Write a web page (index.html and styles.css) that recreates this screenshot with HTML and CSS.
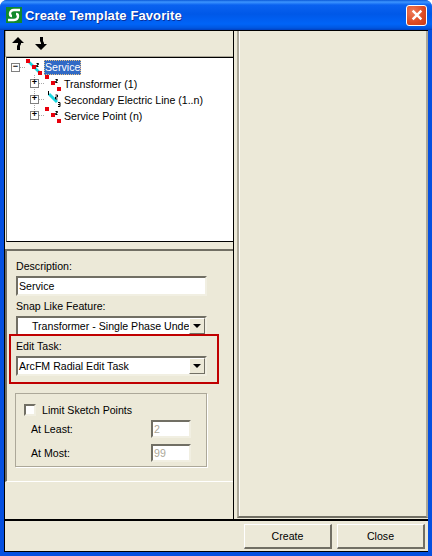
FILE: index.html
```html
<!DOCTYPE html>
<html>
<head>
    <meta charset="utf-8">
    <title>Create Template Favorite</title>
    <link rel="stylesheet" href="styles.css">
</head>
<body>
    <svg class="defs" width="0" height="0">
        <symbol id="feature" viewBox="0 0 16 16">
            <path d="M0 0h4v4h-4zM6 6h4v4h-4zM12 12h4v4h-4z" fill="#e8000c"/>
            <path d="M11 5h2v1h-1v1h-1v1h2" fill="none" stroke="#000" stroke-width="1" transform="translate(-.5 -.5)"/>
        </symbol>
        <symbol id="line-feature" viewBox="0 0 16 16">
            <path d="M4 3l8 8" fill="none" stroke="#19d5e0" stroke-width="3"/>
            <path d="M3.500 0v4M10.500 4h2v2h-2v2h2M13 11.500h2v4h-2M15 13.500h-2" fill="none" stroke="#000" stroke-width="1"/>
        </symbol>
        <symbol id="arrow-up" viewBox="0 0 12 13">
            <path d="M6 0l6 6h-3v1l-1 2v4h-3v-4l1-2v-1h-6z" fill="#000"/>
        </symbol>
    </svg>

    <div class="window">
        <div class="titlebar">
            <svg class="app-icon" viewBox="0 0 16 16">
                <rect width="16" height="16" fill="#128a2c"/>
                <path d="M14 3h-6q-4 0-4 4q0 2 2 2M2 13h6q4 0 4-4q0-2-2-2" fill="none" stroke="#fff" stroke-width="2.400"/>
            </svg>
            <span class="title">Create Template Favorite</span>
            <div class="close-x">
                <svg viewBox="0 0 11 11"><path d="M1.500 1.500l8 8M9.500 1.500l-8 8" stroke="#fff" stroke-width="2.200"/></svg>
            </div>
        </div>

        <div class="client">
            <div class="panes">
                <div class="left-pane">
                    <div class="toolbar">
                        <svg class="tool"><use href="#arrow-up"/></svg>
                        <svg class="tool tool-down"><use href="#arrow-up"/></svg>
                    </div>

                    <div class="tree">
                        <div class="row root">
                            <span class="expander">&minus;</span>
                            <span class="stub"></span>
                            <span class="node-icon">
                                <svg viewBox="0 0 16 16"><path d="M3 3l10 10" stroke="#19d5e0" stroke-width="2.500"/></svg>
                                <svg><use href="#feature"/></svg>
                            </span>
                            <span class="node-label selected">Service</span>
                        </div>
                        <div class="children">
                            <div class="row">
                                <span class="expander">+</span>
                                <span class="stub"></span>
                                <span class="node-icon"><svg><use href="#feature"/></svg></span>
                                <span class="node-label">Transformer (1)</span>
                            </div>
                            <div class="row">
                                <span class="expander">+</span>
                                <span class="stub"></span>
                                <span class="node-icon"><svg><use href="#line-feature"/></svg></span>
                                <span class="node-label">Secondary Electric Line (1..n)</span>
                            </div>
                            <div class="row">
                                <span class="expander">+</span>
                                <span class="stub"></span>
                                <span class="node-icon"><svg><use href="#feature"/></svg></span>
                                <span class="node-label">Service Point (n)</span>
                            </div>
                        </div>
                    </div>

                    <div class="form-panel">
                        <label class="field-label">Description:</label>
                        <div class="textbox">Service</div>

                        <label class="field-label">Snap Like Feature:</label>
                        <div class="combo">
                            <span class="combo-value indented">Transformer - Single Phase Unde</span>
                            <span class="combo-btn"></span>
                        </div>

                        <label class="field-label">Edit Task:</label>
                        <div class="combo">
                            <span class="combo-value">ArcFM Radial Edit Task</span>
                            <span class="combo-btn"></span>
                        </div>

                        <div class="groupbox">
                            <div class="check-row">
                                <span class="checkbox"></span>
                                <span>Limit Sketch Points</span>
                            </div>
                            <div class="limit-row">
                                <span>At Least:</span>
                                <div class="textbox small">2</div>
                            </div>
                            <div class="limit-row">
                                <span>At Most:</span>
                                <div class="textbox small">99</div>
                            </div>
                        </div>

                        <div class="highlight"></div>
                    </div>
                    <div class="form-rest"></div>
                </div>

                <div class="right-pane"></div>
            </div>

            <div class="footer">
                <div class="button">Create</div>
                <div class="button">Close</div>
            </div>
        </div>
    </div>
</body>
</html>
```

FILE: styles.css
```css
:root {
    --face: #ece9d8;
    --shadow: #aca899;
    --dark: #716f64;
}
* {
    box-sizing: border-box;
    margin: 0;
    padding: 0;
}
html, body {
    width: 432px;
    height: 556px;
    overflow: hidden;
    background: #fff;
}
body {
    font-family: "Liberation Sans", sans-serif;
    font-size: 10.600px;
    color: #000;
}
.defs {
    display: block;
    height: 0;
}
.window {
    width: 432px;
    height: 556px;
    display: flex;
    flex-direction: column;
    background: #0550e0;
    border-radius: 7px 7px 0 0;
    overflow: hidden;
}

/* title bar */
.titlebar {
    height: 30px;
    flex: none;
    display: flex;
    align-items: center;
    padding: 0 5px 0 6px;
    background: linear-gradient(#0a58d8 0, #3d95ff 2px, #0a62f0 5px, #0058e8 14px, #0064f8 24px, #0056e0 28px, #0040c0 30px);
}
.app-icon {
    width: 16px;
    height: 16px;
    flex: none;
}
.title {
    flex: 1;
    margin-left: 3px;
    font-family: "Liberation Sans", sans-serif;
    font-weight: 700;
    font-size: 13px;
    letter-spacing: .1px;
    color: #fff;
    text-shadow: 1px 1px 0 #0a2f9a;
}
.close-x {
    width: 21px;
    height: 21px;
    display: flex;
    align-items: center;
    justify-content: center;
    border: 1px solid #fff;
    border-radius: 3px;
    background: radial-gradient(circle at 30% 30%, #ee7a58, #dc4a22 60%, #c83c18);
}
.close-x svg {
    width: 12px;
    height: 12px;
}

/* body of the dialog */
.client {
    flex: 1;
    min-height: 0;
    margin: 0 4px 4px;
    display: flex;
    flex-direction: column;
    background: var(--face);
    border-top: 1px solid #000;
    border-left: 1px solid #000;
    border-bottom: 1px solid #000;
}
.panes {
    height: 490px;
    flex: none;
    display: flex;
    border-bottom: 2px solid #000;
}
.left-pane {
    width: 229px;
    flex: none;
    display: flex;
    flex-direction: column;
    border-right: 1px solid #000;
}
.right-pane {
    flex: 1;
    margin: 0 0 1px 3px;
    border-left: 2px solid var(--shadow);
    border-right: 2px solid var(--shadow);
    border-bottom: 2px solid var(--dark);
    box-shadow: inset 1px 0 0 #fff;
}

/* toolbar */
.toolbar {
    height: 26px;
    flex: none;
    display: flex;
    align-items: center;
    gap: 11px;
    padding: 0 0 0 6px;
    border-left: 1px solid var(--shadow);
    border-bottom: 1px solid var(--shadow);
}
.tool {
    width: 12px;
    height: 13px;
}
.tool-down {
    transform: scaleY(-1);
}

/* tree */
.tree {
    height: 185px;
    flex: none;
    padding: 1px 0 0 4px;
    background: #fff;
    border-left: 1px solid var(--dark);
    border-top: 1px solid #000;
    border-bottom: 1px solid #000;
    margin-left: 1px;
}
.row {
    height: 16px;
    display: flex;
    align-items: center;
}
.root {
    background: transparent;
}
.children {
    padding-left: 19px;
    background: repeating-linear-gradient(#a8a8a8 0 1px, transparent 1px 2px) 23px 0 / 1px 41px no-repeat;
}
.expander {
    width: 9px;
    height: 9px;
    flex: none;
    display: flex;
    align-items: center;
    justify-content: center;
    margin-top: 1px;
    background: #fff;
    border: 1px solid #808080;
    font: 700 9px/7px "Liberation Mono", monospace;
}
.stub {
    width: 6px;
    height: 1px;
    flex: none;
    background: repeating-linear-gradient(90deg, #a8a8a8 0 1px, transparent 1px 2px);
}
.node-icon {
    width: 16px;
    height: 16px;
    flex: none;
    display: grid;
}
.node-icon svg {
    grid-area: 1 / 1;
    width: 16px;
    height: 16px;
}
.node-label {
    margin-left: 2px;
    padding: 0 1px;
    white-space: nowrap;
    position: relative;
    top: 1px;
}
.selected {
    top: 0;
    margin-left: 2px;
    line-height: 15px;
    color: #fff;
    background: #316ac5;
    outline: 1px dotted #e8c080;
    outline-offset: -1px;
}

/* form */
.form-panel {
    height: 233px;
    flex: none;
    position: relative;
    margin-top: 7px;
    padding: 8px 0 0 9px;
    border-top: 2px solid var(--dark);
    border-left: 2px solid var(--dark);
    border-bottom: 1px solid #fff;
}
.form-rest {
    flex: 1;
}
.field-label {
    display: block;
    height: 14px;
    line-height: 14px;
}
.textbox {
    width: 191px;
    height: 20px;
    margin: 3px 0;
    padding: 0 1px;
    line-height: 17px;
    background: #fff;
    border: 2px solid var(--dark);
    border-right-color: #f1efe2;
    border-bottom-color: #f1efe2;
}
.combo {
    width: 191px;
    height: 20px;
    margin: 3px 0;
    display: flex;
    background: #fff;
    border: 2px solid var(--dark);
    border-right-color: #f1efe2;
    border-bottom-color: #f1efe2;
}
.combo-value {
    flex: 1;
    padding-left: 1px;
    line-height: 17px;
    white-space: nowrap;
}
.indented {
    padding-left: 14px;
}
.combo-btn {
    width: 16px;
    flex: none;
    display: flex;
    align-items: center;
    justify-content: center;
    background: var(--face);
    border: 1px solid var(--dark);
    border-top-color: #fff;
    border-left-color: #fff;
}
.combo-btn::after {
    content: "";
    border: 4px solid transparent;
    border-top: 4px solid #000;
    border-bottom: 0;
}
.groupbox {
    width: 192px;
    height: 74px;
    margin: 17px 0 0 -1px;
    padding: 9px 15px 0 8px;
    border: 1px solid var(--shadow);
    box-shadow: 1px 1px 0 #fff;
}
.check-row {
    display: flex;
    align-items: center;
    gap: 6px;
    height: 14px;
}
.checkbox {
    width: 12px;
    height: 12px;
    background: #fff;
    border: 2px solid var(--dark);
    border-right-color: #f1efe2;
    border-bottom-color: #f1efe2;
}
.limit-row {
    height: 24px;
    display: flex;
    align-items: center;
    justify-content: space-between;
    padding-left: 7px;
}
.small {
    width: 40px;
    height: 18px;
    margin: 0;
    padding: 0 1px;
    line-height: 14px;
    color: #aca899;
}
.highlight {
    position: absolute;
    left: 2px;
    top: 83px;
    width: 210px;
    height: 50px;
    border: 2px solid #c00000;
}

/* buttons */
.footer {
    flex: 1;
    display: flex;
    justify-content: flex-end;
    gap: 5px;
    padding: 3px 3px 0 0;
}
.button {
    width: 88px;
    height: 25px;
    line-height: 22px;
    text-align: center;
    background: var(--face);
    border: 2px solid var(--dark);
    border-top: 1px solid #fff;
    border-left: 1px solid #fff;
}
```
